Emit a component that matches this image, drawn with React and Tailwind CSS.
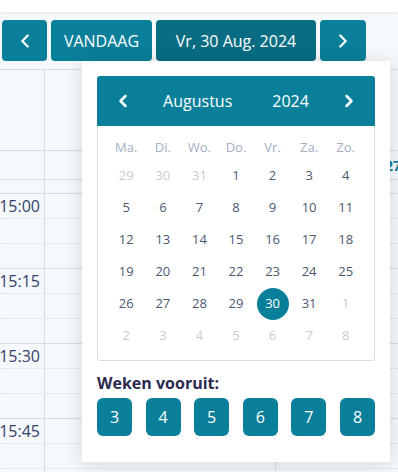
import { ChevronLeft, ChevronRight } from 'lucide-react';

const font = { fontFamily: '"Open Sans", "Noto Sans", sans-serif' };

/* weken in het popup */
const weeks = [
    ['29', '30', '31', '1', '2', '3', '4'],
    ['5', '6', '7', '8', '9', '10', '11'],
    ['12', '13', '14', '15', '16', '17', '18'],
    ['19', '20', '21', '22', '23', '24', '25'],
    ['26', '27', '28', '29', '30', '31', '1'],
    ['2', '3', '4', '5', '6', '7', '8'],
];
const dagen = ['Ma.', 'Di.', 'Wo.', 'Do.', 'Vr.', 'Za.', 'Zo.'];

const isOther = (wi, d) => (wi === 0 && Number(d) > 20) || (wi >= 4 && Number(d) < 10);

/* tijdslots achtergrond */
const tijden = ['15:00', '15:15', '15:30', '15:45'];

const Slot = ({ label, solid }) => (
    <div className={`flex h-[25px] border-b border-[#d9dbe0] ${solid ? 'border-solid' : 'border-dotted'}`}>
        <div className="w-[45px] border-r border-solid border-r-[#d9dbe0] flex items-center justify-end pr-[4px] text-[16px] text-[#35416a] leading-none">
            {label}
        </div>
        <div className="w-[231px] border-r border-solid border-r-[#d9dbe0]" />
        <div className="flex-1" />
    </div>
);

const Achtergrond = () => (
    <div className="border-t border-[#d9dbe0]">
        <div className="flex h-[81px] border-b border-[#d9dbe0]">
            <div className="w-[45px] border-r border-[#d9dbe0]" />
            <div className="w-[231px] border-r border-[#d9dbe0]" />
            <div className="flex-1" />
        </div>
        <div className="flex h-[29px] border-b border-[#d9dbe0]">
            <div className="w-[45px] border-r border-[#d9dbe0]" />
            <div className="w-[231px] border-r border-[#d9dbe0]" />
            <div className="flex-1 flex items-center pl-[109px] whitespace-nowrap overflow-hidden text-[14px] font-bold text-[#0a7f9a]">27</div>
        </div>
        <div className="flex h-[14px] border-b border-[#d9dbe0]">
            <div className="w-[45px] border-r border-[#d9dbe0]" />
            <div className="w-[231px] border-r border-[#d9dbe0]" />
            <div className="flex-1" />
        </div>
        {tijden.map(t => (
            <div key={t}>
                <Slot label={t} />
                <Slot />
                <Slot solid />
            </div>
        ))}
    </div>
);

const DatumPopup = () => (
    <div className="absolute left-[82px] top-[61px] w-[308px] h-[401px] bg-white px-[15px] pt-[15px] shadow-[0_2px_18px_rgba(0,0,0,0.14)] z-20">
        {/* header */}
        <div className="h-[50px] bg-[#0a7f9a] rounded-t-[3px] flex items-center justify-between px-[16px] text-white">
            <ChevronLeft size={20} strokeWidth={3} />
            <div className="flex items-center gap-[40px] text-[16px] font-medium">
                <span>Augustus</span>
                <span>2024</span>
            </div>
            <ChevronRight size={20} strokeWidth={3} />
        </div>

        {/* maand grid */}
        <div className="border-x border-b border-[#dcdee2] rounded-b-[3px] px-[10px] pt-[10px] pb-[8px]">
            <div className="grid grid-cols-7 h-[24px] items-center text-[13px] text-[#a3aec0]">
                {dagen.map(d => <div key={d} className="text-center">{d}</div>)}
            </div>
            {weeks.map((w, wi) => (
                <div key={wi} className="grid grid-cols-7 h-[32px] items-center text-[13px]">
                    {w.map((d, di) => {
                        const sel = wi === 4 && d === '30';
                        return (
                            <div key={di} className="flex justify-center">
                                {sel ? (
                                    <span className="w-8 h-8 rounded-full bg-[#0a7f9a] text-white flex items-center justify-center">{d}</span>
                                ) : (
                                    <span className={isOther(wi, d) ? 'text-[#c9cccf]' : 'text-[#4c5870]'}>{d}</span>
                                )}
                            </div>
                        );
                    })}
                </div>
            ))}
        </div>

        {/* weken vooruit */}
        <div className="mt-[11px] text-[16px] leading-[22px] font-bold text-[#2b2950]">Weken vooruit:</div>
        <div className="mt-[4px] flex justify-between">
            {[3, 4, 5, 6, 7, 8].map(n => (
                <button key={n} className="w-[35px] h-[38px] rounded-[6px] bg-[#0a7f9a] text-white text-[16px] flex items-center justify-center">
                    {n}
                </button>
            ))}
        </div>
    </div>
);

export default function App() {
    return (
        <div className="relative w-[398px] h-[472px] overflow-hidden bg-[#f6f9fc]" style={font}>
            {/* witte balk boven */}
            <div className="relative z-10 h-[12px] bg-white shadow-[0_1px_3px_rgba(0,0,0,0.08)]" />

            {/* toolbar */}
            <div className="flex gap-[4px] px-[2px] pt-[8px] pb-[8px]">
                <button className="w-[45px] h-[41px] rounded-[4px] bg-[#0a7f9a] text-white flex items-center justify-center">
                    <ChevronLeft size={22} strokeWidth={2.4} />
                </button>
                <button className="w-[101px] h-[41px] rounded-[4px] bg-[#0a7f9a] text-white text-[16px] flex items-center justify-center">
                    VANDAAG
                </button>
                <button className="w-[160px] h-[41px] rounded-[4px] bg-[#086c82] text-white text-[16px] flex items-center justify-center">
                    Vr, 30 Aug. 2024
                </button>
                <button className="w-[46px] h-[41px] rounded-[4px] bg-[#0a7f9a] text-white flex items-center justify-center">
                    <ChevronRight size={22} strokeWidth={2.4} />
                </button>
            </div>

            <Achtergrond />
            <DatumPopup />
        </div>
    );
}
